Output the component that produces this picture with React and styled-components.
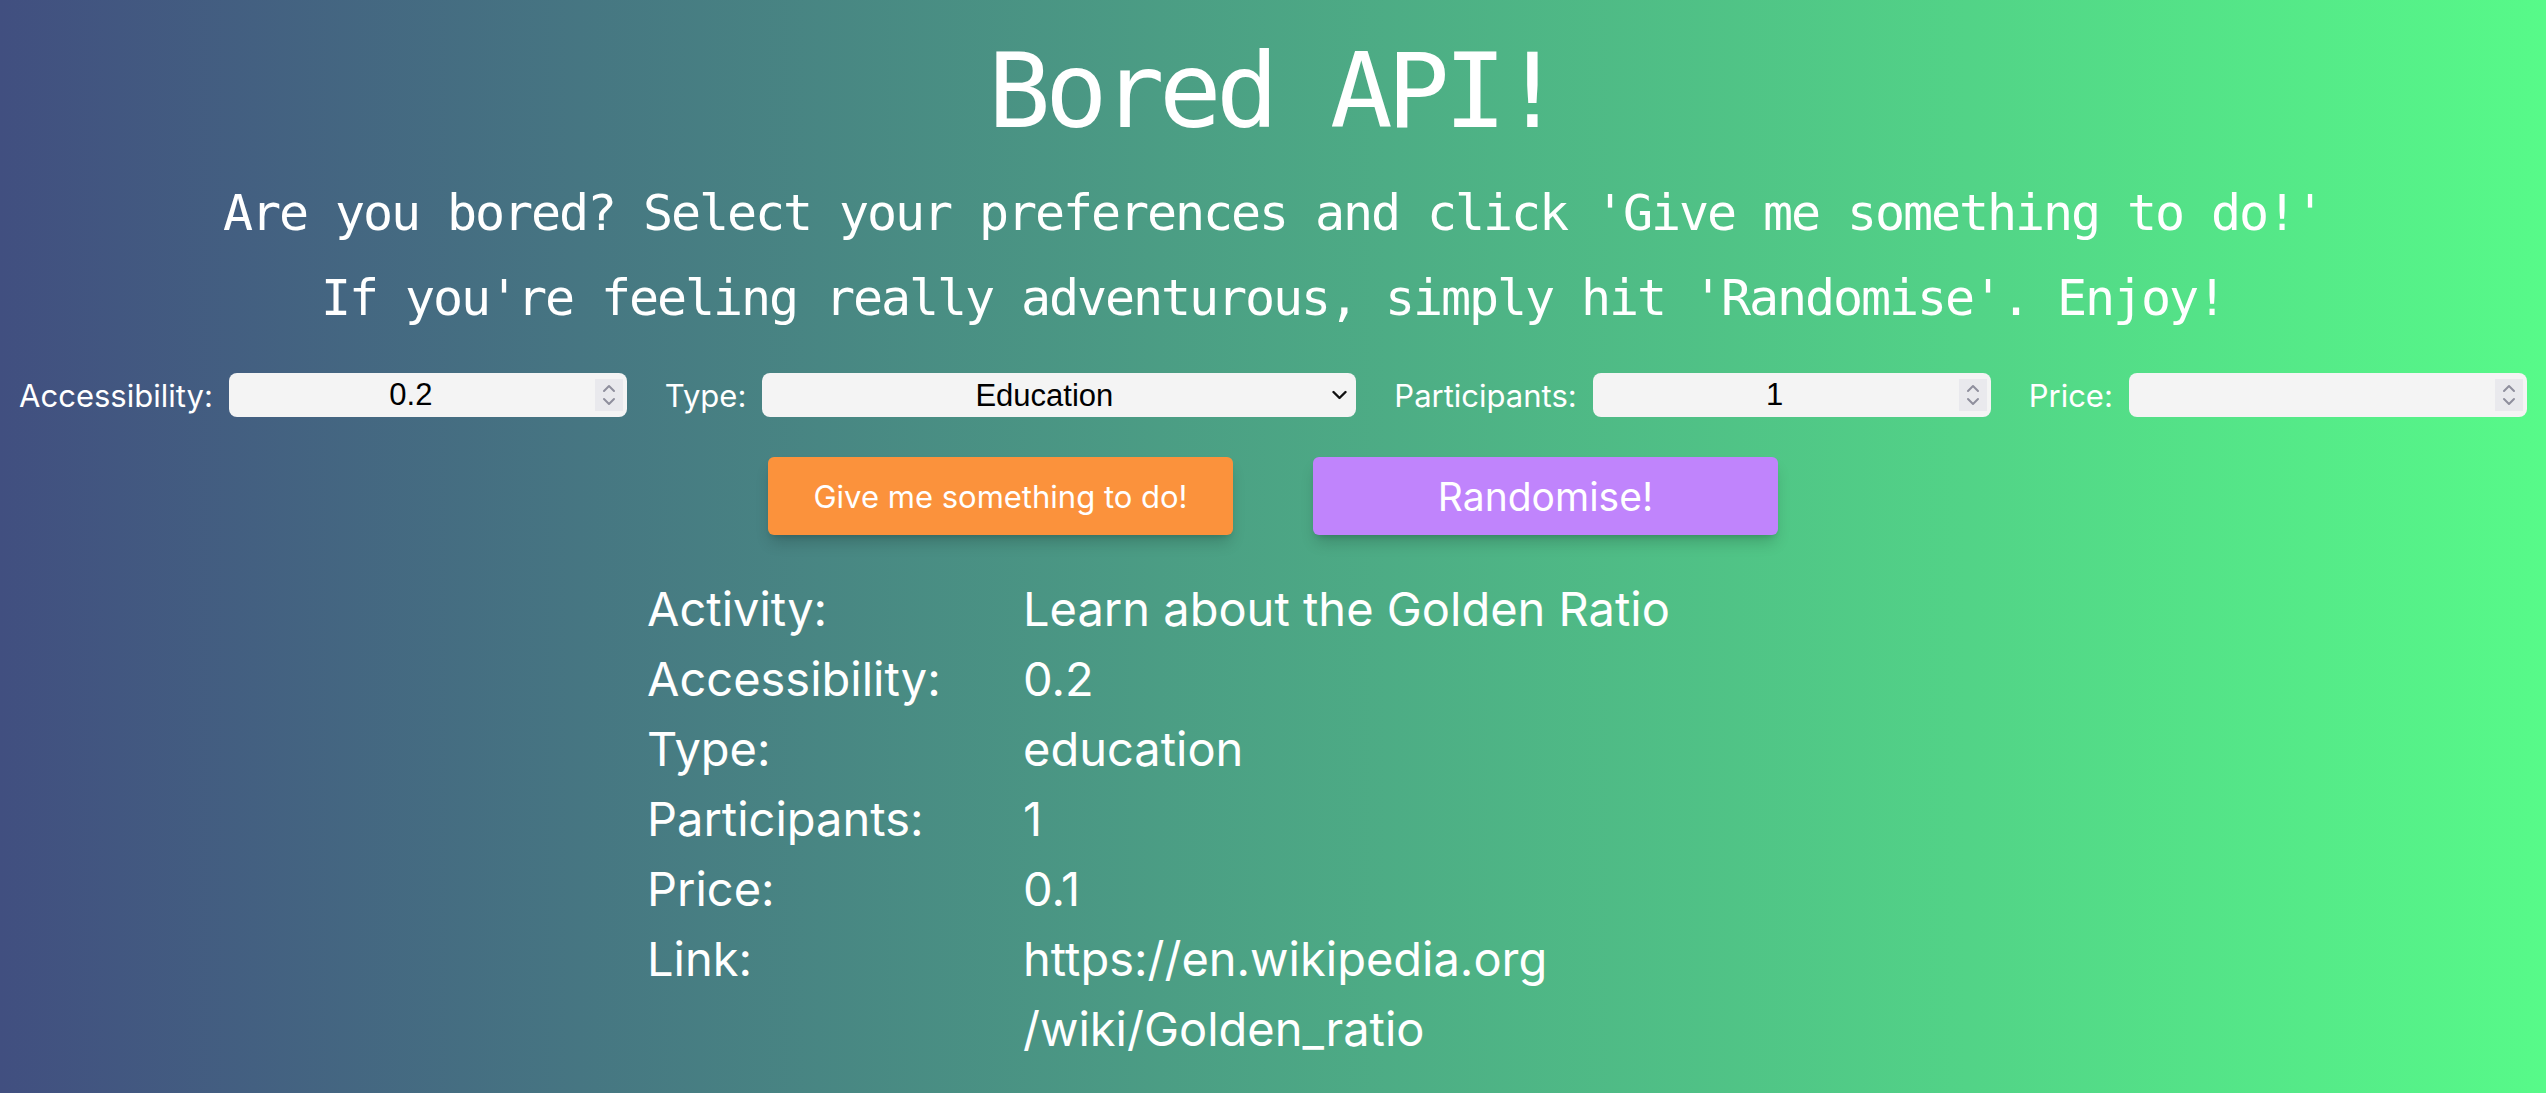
import { useState } from "react";
import styled, { createGlobalStyle } from "styled-components";

const GlobalStyle = createGlobalStyle`
  html, body {
    margin: 0;
    padding: 0;
  }
  body {
    min-height: 100vh;
    background: linear-gradient(to right, #414f80, #57fa89);
    font-family: "Inter", "Liberation Sans", sans-serif;
    color: white;
  }
`;

const Page = styled.main`
  min-height: 100vh;
  padding-top: 39px;
  box-sizing: border-box;
  display: flex;
  flex-direction: column;
  align-items: center;
`;

const Title = styled.h1`
  margin: 0;
  font-family: "DejaVu Sans Mono", "Liberation Mono", monospace;
  font-weight: normal;
  font-size: 104px;
  line-height: 104px;
  letter-spacing: -5.6px;
  text-align: center;
`;

const Intro = styled.div`
  margin-top: 28px;
  text-align: center;
`;

const Tagline = styled.p`
  margin: 0;
  font-family: "DejaVu Sans Mono", "Liberation Mono", monospace;
  font-size: 50px;
  line-height: 85px;
  letter-spacing: -2.1px;
`;

const Controls = styled.div`
  margin-top: 32px;
  display: flex;
  align-items: center;
  justify-content: center;
  gap: 38px;
  width: 100%;
`;

const Field = styled.label`
  display: flex;
  align-items: center;
  gap: 16px;
  font-size: 31px;
`;

const InputWrap = styled.div`
  position: relative;
  width: ${(p) => p.$width}px;
  height: 44px;
`;

const NumberInput = styled.input`
  width: 100%;
  height: 100%;
  box-sizing: border-box;
  border: none;
  border-radius: 8px;
  background: #f4f4f4;
  color: #000;
  font-family: "Liberation Sans", Arial, sans-serif;
  font-size: 31px;
  text-align: center;
  padding: 0 34px 0 0;
  outline: none;
  -moz-appearance: textfield;
  &::-webkit-inner-spin-button,
  &::-webkit-outer-spin-button {
    -webkit-appearance: none;
    margin: 0;
  }
`;

const Select = styled.select`
  width: 100%;
  height: 100%;
  box-sizing: border-box;
  border: none;
  border-radius: 8px;
  background: #f4f4f4;
  color: #000;
  font-family: "Liberation Sans", Arial, sans-serif;
  font-size: 31px;
  text-align: center;
  text-align-last: center;
  appearance: none;
  -webkit-appearance: none;
  padding: 0 30px 0 0;
  outline: none;
`;

const Spinner = styled.span`
  position: absolute;
  top: 6px;
  right: 4px;
  width: 28px;
  height: 32px;
  background: #e9e9ed;
  display: flex;
  align-items: center;
  justify-content: center;
  pointer-events: none;
`;

const Chevron = styled.span`
  position: absolute;
  top: 50%;
  right: 9px;
  transform: translateY(-50%);
  display: flex;
  pointer-events: none;
`;

const Buttons = styled.div`
  margin-top: 40px;
  display: flex;
  justify-content: center;
  gap: 80px;
`;

const ActionButton = styled.button`
  width: 465px;
  height: 78px;
  border: none;
  border-radius: 6px;
  background: ${(p) => p.$bg};
  color: white;
  font-family: "Inter", "Liberation Sans", sans-serif;
  font-size: ${(p) => p.$size}px;
  cursor: pointer;
  box-shadow: 0 10px 15px -3px rgba(0, 0, 0, 0.18),
    0 4px 6px -4px rgba(0, 0, 0, 0.18);
`;

const Details = styled.dl`
  margin: 39px 0 0;
  width: 1252px;
  display: grid;
  grid-template-columns: 376px 1fr;
  font-size: 47px;
  line-height: 70px;
`;

const Term = styled.dt`
  margin: 0;
`;

const Value = styled.dd`
  margin: 0;
`;

const Link = styled.a`
  color: inherit;
  text-decoration: none;
`;

function SpinIcon() {
  return (
    <Spinner>
      <svg width="14" height="24" viewBox="0 0 14 24" fill="none" stroke="#8f8f9d" strokeWidth="2" strokeLinecap="round" strokeLinejoin="round">
        <path d="M2 8 L7 3 L12 8" />
        <path d="M2 16 L7 21 L12 16" />
      </svg>
    </Spinner>
  );
}

function NumberField({ label, value, onChange, width = 398 }) {
  return (
    <Field>
      {label}
      <InputWrap $width={width}>
        <NumberInput type="number" step="0.1" value={value} onChange={(e) => onChange(e.target.value)} />
        <SpinIcon />
      </InputWrap>
    </Field>
  );
}

const activity = [
  ["Activity:", "Learn about the Golden Ratio"],
  ["Accessibility:", "0.2"],
  ["Type:", "education"],
  ["Participants:", "1"],
  ["Price:", "0.1"],
];

export default function App() {
  const [accessibility, setAccessibility] = useState("0.2");
  const [type, setType] = useState("education");
  const [participants, setParticipants] = useState("1");
  const [price, setPrice] = useState("");

  return (
    <>
      <GlobalStyle />
      <Page>
        <Title>Bored API!</Title>
        <Intro>
          <Tagline>Are you bored? Select your preferences and click 'Give me something to do!'</Tagline>
          <Tagline>If you're feeling really adventurous, simply hit 'Randomise'. Enjoy!</Tagline>
        </Intro>

        <Controls>
          <NumberField label="Accessibility:" value={accessibility} onChange={setAccessibility} />
          <Field>
            Type:
            <InputWrap $width={594}>
              <Select value={type} onChange={(e) => setType(e.target.value)}>
                <option value="education">Education</option>
                <option value="recreational">Recreational</option>
                <option value="social">Social</option>
                <option value="diy">DIY</option>
                <option value="charity">Charity</option>
                <option value="cooking">Cooking</option>
                <option value="relaxation">Relaxation</option>
                <option value="music">Music</option>
                <option value="busywork">Busywork</option>
              </Select>
              <Chevron>
                <svg width="15" height="9" viewBox="0 0 15 9" fill="none" stroke="#111" strokeWidth="2.4" strokeLinecap="round" strokeLinejoin="round">
                  <path d="M1.5 1.5 L7.5 7.5 L13.5 1.5" />
                </svg>
              </Chevron>
            </InputWrap>
          </Field>
          <NumberField label="Participants:" value={participants} onChange={setParticipants} />
          <NumberField label="Price:" value={price} onChange={setPrice} />
        </Controls>

        <Buttons>
          <ActionButton $bg="#fb923c" $size={31}>Give me something to do!</ActionButton>
          <ActionButton $bg="#c084fc" $size={39}>Randomise!</ActionButton>
        </Buttons>

        <Details>
          {activity.map(([term, value]) => (
            <>
              <Term key={term}>{term}</Term>
              <Value>{value}</Value>
            </>
          ))}
          <Term>Link:</Term>
          <Value>
            <Link href="https://en.wikipedia.org/wiki/Golden_ratio">
              https://en.wikipedia.org
              <br />
              /wiki/Golden_ratio
            </Link>
          </Value>
        </Details>
      </Page>
    </>
  );
}
